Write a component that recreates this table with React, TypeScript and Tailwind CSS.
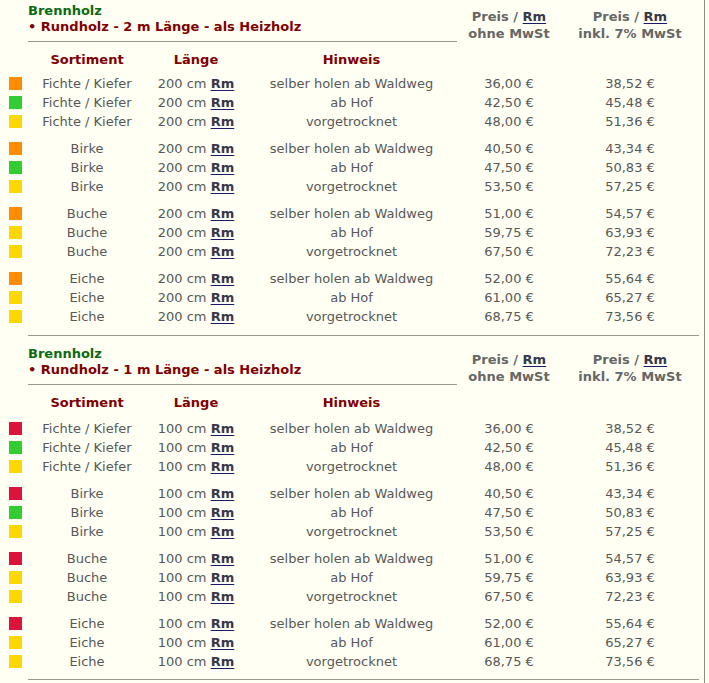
const cols = "grid grid-cols-[28px_118px_100px_211px_104px_138px]";

type Row = { color: string; sort: string; hint: string; net: string; gross: string };

const hints = ["selber holen ab Waldweg", "ab Hof", "vorgetrocknet"];

const sectionA: Row[][] = [
  ["Fichte / Kiefer", ["36,00", "38,52"], ["42,50", "45,48"], ["48,00", "51,36"], ["bg-[#ff8c00]", "bg-[#32cd32]", "bg-[#ffd700]"]],
  ["Birke", ["40,50", "43,34"], ["47,50", "50,83"], ["53,50", "57,25"], ["bg-[#ff8c00]", "bg-[#32cd32]", "bg-[#ffd700]"]],
  ["Buche", ["51,00", "54,57"], ["59,75", "63,93"], ["67,50", "72,23"], ["bg-[#ff8c00]", "bg-[#ffd700]", "bg-[#ffd700]"]],
  ["Eiche", ["52,00", "55,64"], ["61,00", "65,27"], ["68,75", "73,56"], ["bg-[#ff8c00]", "bg-[#ffd700]", "bg-[#ffd700]"]],
].map(([sort, a, b, c, colors]) =>
  [a, b, c].map((p, i) => ({
    color: (colors as string[])[i],
    sort: sort as string,
    hint: hints[i],
    net: (p as string[])[0],
    gross: (p as string[])[1],
  }))
);

const sectionB: Row[][] = sectionA.map((g) =>
  g.map((r, i) => ({
    ...r,
    color: i === 0 ? "bg-[#dc143c]" : r.color,
  }))
);

function Rm() {
  return (
    <span className="font-bold text-[#38384a] underline decoration-[#1a1a66] underline-offset-2">Rm</span>
  );
}

function Section({ length, cm, groups, firstGap, endGap }: { length: string; cm: string; groups: Row[][]; firstGap: string; endGap: string }) {
  return (
    <div>
      <div className={`${cols} h-[42px]`}>
        <div className="col-start-2 col-span-3 box-border h-[42px] border-b border-[#9a9a8c] pt-[3px] text-[13px] leading-4 font-bold">
          <div className="text-[#0b6a12]">Brennholz</div>
          <div className="text-[#800000]">• Rundholz - {length} m Länge - als Heizholz</div>
        </div>
        <div className="whitespace-nowrap pt-[8px] text-center text-[13px] leading-[17px] font-bold text-[#666]">
          <div>
            Preis / <Rm />
          </div>
          <div>ohne MwSt</div>
        </div>
        <div className="whitespace-nowrap pt-[8px] text-center text-[13px] leading-[17px] font-bold text-[#666]">
          <div>
            Preis / <Rm />
          </div>
          <div>inkl. 7% MwSt</div>
        </div>
      </div>
      <div className={`${cols} mt-[8px] h-[19px] items-center text-center text-[13px] font-bold text-[#800000]`}>
        <div />
        <div>Sortiment</div>
        <div>Länge</div>
        <div>Hinweis</div>
      </div>
      <div className={firstGap}>
        {groups.map((g, gi) => (
          <div key={gi} className={gi > 0 ? "mt-[8px]" : ""}>
            {g.map((r, ri) => (
              <div key={ri} className={`${cols} h-[19px] items-center text-center text-[13px] leading-[19px] text-[#585858]`}>
                <div className={`ml-[9px] h-[13px] w-[13px] ${r.color}`} />
                <div>{r.sort}</div>
                <div>
                  {cm} cm <Rm />
                </div>
                <div>{r.hint}</div>
                <div>{r.net} €</div>
                <div>{r.gross} €</div>
              </div>
            ))}
          </div>
        ))}
      </div>
      <div className={`${endGap} ml-[28px] w-[671px] border-t border-[#9a9a8c]`} />
    </div>
  );
}

export default function App() {
  return (
    <div className="min-h-[683px] w-[709px] bg-[#fffff3] font-['DejaVu_Sans',Verdana,sans-serif]">
      <div className="box-border w-[705px] border-r border-[#8c8c7c] pb-[4px]">
        <Section length="2" cm="200" groups={sectionA} firstGap="mt-[5px]" endGap="mt-[9px]" />
        <div className="mt-[7px]">
          <Section length="1" cm="100" groups={sectionB} firstGap="mt-[7px]" endGap="mt-[8px]" />
        </div>
      </div>
    </div>
  );
}
